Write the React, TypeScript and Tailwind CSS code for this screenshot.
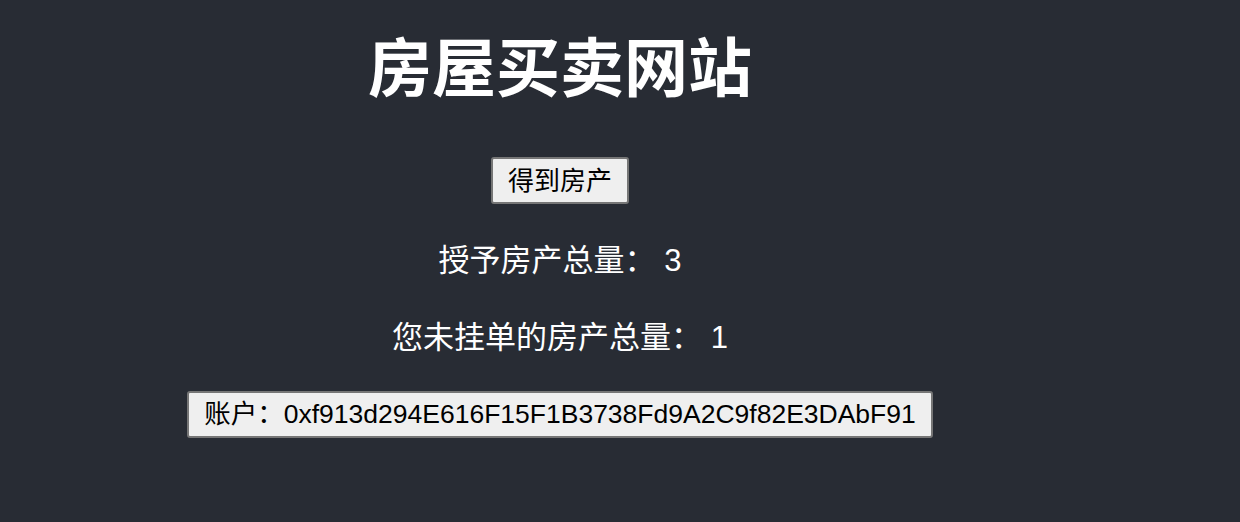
import React from "react";

const font = { fontFamily: '"Liberation Sans", "Noto Sans CJK SC", sans-serif' };

export default function App() {
  const account = "0xf913d294E616F15F1B3738Fd9A2C9f82E3DAbF91";
  return (
    <div className="min-h-[522px] w-full bg-[#282c34] text-white" style={font}>
      <div className="flex w-[1120px] flex-col items-center">
        <h1 className="mt-[30px] text-[64px] font-bold leading-[78px]">房屋买卖网站</h1>
        <button className="mt-[49px] h-[47px] rounded-[3px] border-2 border-[#767676] bg-[#efefef] px-[15px] text-[26px] leading-none text-black">
          得到房产
        </button>
        <p className="mt-[37px] text-[31px] leading-[40px]">授予房产总量： 3</p>
        <p className="mt-[37px] text-[31px] leading-[40px]">您未挂单的房产总量： 1</p>
        <button className="mt-[33px] h-[47px] rounded-[3px] border-2 border-[#767676] bg-[#efefef] px-[15px] text-[26.5px] leading-none text-black">
          账户：{account}
        </button>
      </div>
    </div>
  );
}
